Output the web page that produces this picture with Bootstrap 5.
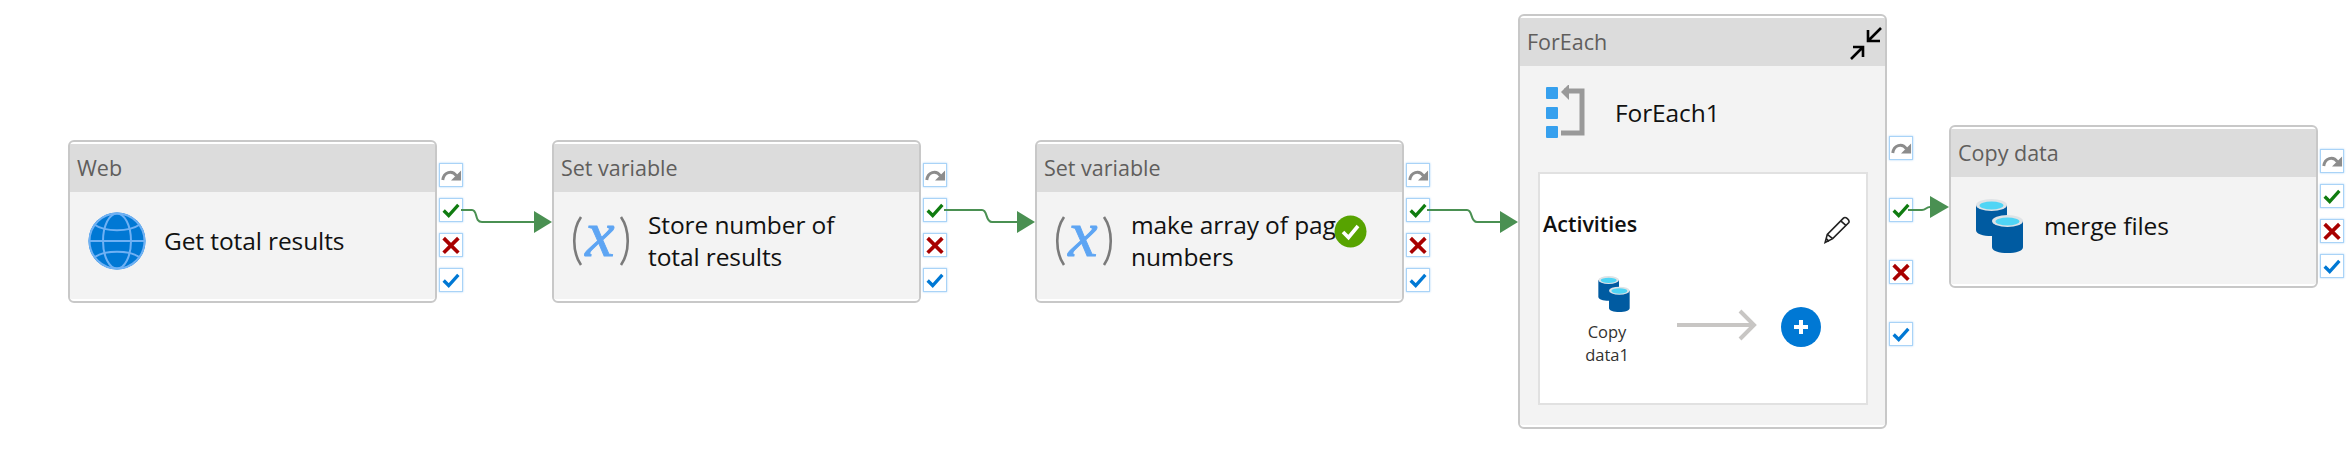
<!DOCTYPE html>
<html lang="en">
<head>
<meta charset="utf-8">
<title>Pipeline</title>
<link href="https://cdn.jsdelivr.net/npm/bootstrap@5.3.0/dist/css/bootstrap.min.css" rel="stylesheet">
<style>
html,body{background:#fff;margin:0;overflow:hidden}
body{font-family:"Open Sans","Noto Sans",sans-serif}
.canvas{position:relative;width:2352px;height:458px;overflow:hidden}
.wires{position:absolute;left:0;top:0;pointer-events:none}
.node{position:absolute}
.n1{left:68px;top:140px}
.n2{left:552px;top:140px}
.n3{left:1035px;top:140px}
.n4{left:1518px;top:14px}
.n5{left:1949px;top:125px}
.act.card{width:369px;height:163px;border:2.5px solid #c8c8c8;border-radius:6px;background:#fff;padding:2px 0;overflow:visible;flex:none;position:relative}
.act.tall{height:415px}
.act .card-header{height:48px;background:#dcdcdc;border:0;border-radius:0;padding:0 0 0 7px;font-size:21.5px;line-height:48px;color:#605e5c;display:flex;justify-content:space-between}
.act .card-body{background:#f3f3f3;padding:0;flex:1;min-height:0}
.main-row{height:106px;padding:0 0 9px 17px}
.main-row .ico{width:60px;flex:none}
.ttl{font-size:24.5px;line-height:32px;color:#111;margin-left:17px;width:240px;letter-spacing:-.1px}
.ports{width:24px;margin-left:2px;gap:11px;margin-top:23px;flex:none}
.ports.wide{gap:38px;margin-top:122px}
.ports.c5{margin-top:24px}
.port{width:24px;height:24px;background:#fff;border:1px solid #a9d3f7;box-shadow:0 0 2px #a9d3f7;display:block}
.done{position:absolute;left:297px;top:73px}
.fe-head{height:106px;padding:0 0 12px 26px}
.fe-name{font-size:24.5px;color:#111;margin-left:25px;letter-spacing:-.1px}
.inner{height:233px;width:330px;margin-left:18px;background:#fff;border:2px solid #e1e1e1;padding:0 3px}
.inner h6{font-size:21.5px;font-weight:600;color:#111;margin:0;padding-top:7px}
.inner-top{height:64px;padding-top:30px;padding-right:12px}
.inner-top svg{margin-top:12px}
.sub-copy{width:80px;font-size:16.5px;line-height:23px;color:#323130;text-align:center;margin-left:24px;padding-top:38px}
.sub-flow{margin-left:30px;margin-top:64px}
.sub-copy svg{display:block;margin:0 auto 8px;position:relative;left:7px}
</style>
</head>
<body>
<svg width="0" height="0" class="position-absolute">
<defs>
<symbol id="skip" viewBox="0 0 24 24"><path d="M3 17.500C4 9 13 6 18 13" fill="none" stroke="#8c8c8c" stroke-width="3.200"/><path d="M23 7V18H12Z" fill="#8c8c8c"/></symbol>
<symbol id="ok" viewBox="0 0 24 24"><path d="M4 12.500l5.500 5.500L20 6.500" fill="none" stroke="#107c10" stroke-width="3.600"/></symbol>
<symbol id="bad" viewBox="0 0 24 24"><path d="M4 4.500L20 20.500M20 4.500L4 20.500" fill="none" stroke="#a80000" stroke-width="4"/></symbol>
<symbol id="fin" viewBox="0 0 24 24"><path d="M4 12.500l5.500 5.500L20 6.500" fill="none" stroke="#0078d4" stroke-width="3.600"/></symbol>
<symbol id="vari" viewBox="0 0 60 50">
<path d="M10 1C1 14 1 36 10 49" fill="none" stroke="#7a7a7a" stroke-width="2.600"/>
<path d="M50 1C59 14 59 36 50 49" fill="none" stroke="#7a7a7a" stroke-width="2.600"/>
<text x="29" y="40" text-anchor="middle" font-family="Liberation Serif,serif" font-style="italic" font-size="66" fill="#5ea5f3" stroke="#5ea5f3" stroke-width=".9">x</text>
</symbol>
<symbol id="db" viewBox="0 0 47 54">
<path d="M0 6V31C0 35 7 37 15.500 37S31 35 31 31V6Z" fill="#005ba1"/>
<ellipse cx="15.500" cy="6" rx="15.500" ry="6" fill="#dfe3e6"/>
<ellipse cx="15.500" cy="6.500" rx="12" ry="4" fill="#50d5f5"/>
<path d="M16 22V48C16 52 23 54 31.500 54S47 52 47 48V22Z" fill="#005ba1"/>
<ellipse cx="31.500" cy="22" rx="15.500" ry="6" fill="#dfe3e6"/>
<ellipse cx="31.500" cy="22.500" rx="12" ry="4" fill="#50d5f5"/>
</symbol>
</defs>
</svg>
<div class="canvas">

<div class="node n1 d-flex">
  <div class="card act">
    <div class="card-header">Web</div>
    <div class="card-body">
      <div class="main-row d-flex align-items-center">
        <svg class="ico" width="60" height="58" viewBox="0 0 60 58"><circle cx="30" cy="29" r="28.500" fill="#0078d4"/><g fill="none" stroke="#6fb1f4" stroke-width="2"><circle cx="30" cy="29" r="27.500"/><ellipse cx="30" cy="29" rx="14" ry="27.500"/><path d="M2 29H58"/><path d="M8 13C18 20 42 20 52 13"/><path d="M8 45C18 38 42 38 52 45"/></g></svg>
        <div class="ttl">Get total results</div>
      </div>
    </div>
  </div>
  <div class="ports d-flex flex-column">
    <svg class="port"><use href="#skip"/></svg><svg class="port"><use href="#ok"/></svg><svg class="port"><use href="#bad"/></svg><svg class="port"><use href="#fin"/></svg>
  </div>
</div>

<div class="node n2 d-flex">
  <div class="card act">
    <div class="card-header">Set variable</div>
    <div class="card-body">
      <div class="main-row d-flex align-items-center">
        <svg class="ico" width="60" height="50"><use href="#vari"/></svg>
        <div class="ttl">Store number of total results</div>
      </div>
    </div>
  </div>
  <div class="ports d-flex flex-column">
    <svg class="port"><use href="#skip"/></svg><svg class="port"><use href="#ok"/></svg><svg class="port"><use href="#bad"/></svg><svg class="port"><use href="#fin"/></svg>
  </div>
</div>

<div class="node n3 d-flex">
  <div class="card act">
    <div class="card-header">Set variable</div>
    <div class="card-body">
      <div class="main-row d-flex align-items-center">
        <svg class="ico" width="60" height="50"><use href="#vari"/></svg>
        <div class="ttl">make array of page numbers</div>
      </div>
    </div>
    <svg class="done" width="33" height="33" viewBox="0 0 33 33"><circle cx="16.500" cy="16.500" r="16" fill="#57a300"/><path d="M9 17l5.500 5.500L24 11" fill="none" stroke="#fff" stroke-width="3.600"/></svg>
  </div>
  <div class="ports d-flex flex-column">
    <svg class="port"><use href="#skip"/></svg><svg class="port"><use href="#ok"/></svg><svg class="port"><use href="#bad"/></svg><svg class="port"><use href="#fin"/></svg>
  </div>
</div>

<div class="node n4 d-flex">
  <div class="card act tall">
    <div class="card-header">ForEach
      <svg width="36" height="40" viewBox="0 0 36 40" class="mt-1"><g fill="none" stroke="#000" stroke-width="2.600"><path d="M32 6L19 19M19 8V19H31"/><path d="M2 37L14 25M4 25H14V35"/></g></svg>
    </div>
    <div class="card-body">
      <div class="fe-head d-flex align-items-center">
        <svg width="44" height="56" viewBox="0 0 44 56" class="flex-none">
          <g fill="#36a0ee"><rect x="0" y="2" width="12" height="12" rx="1"/><rect x="0" y="22" width="12" height="12" rx="1"/><rect x="0" y="41" width="12" height="12" rx="1"/></g>
          <path d="M18 6H36V48H15" fill="none" stroke="#999" stroke-width="5"/><path d="M15 7L23 -1V15Z" fill="#999"/>
        </svg>
        <div class="fe-name">ForEach1</div>
      </div>
      <div class="inner">
        <div class="inner-top d-flex justify-content-between align-items-start">
          <h6>Activities</h6>
          <svg width="28" height="28" viewBox="0 0 26 26"><g fill="none" stroke="#222" stroke-width="1.500"><path d="M2 24.500L4 17L19 2C21 0 25 4 24 6L9 21Z"/><path d="M4 17L9 21M16.500 4.500L21.500 9M3 21L5.500 23.500"/></g></svg>
        </div>
        <div class="d-flex">
          <div class="sub-copy">
            <svg width="32" height="36"><use href="#db"/></svg>
            Copy data1
          </div>
          <svg class="sub-flow" width="156" height="60" viewBox="0 0 156 60"><g fill="none" stroke="#c8c6c4" stroke-width="4"><path d="M0 23H76"/><path d="M63 9L77 23L63 37"/></g><circle cx="124" cy="25" r="20" fill="#0078d4"/><path d="M124 18V32M117 25H131" stroke="#fff" stroke-width="4" fill="none"/></svg>
        </div>
      </div>
    </div>
  </div>
  <div class="ports wide d-flex flex-column">
    <svg class="port"><use href="#skip"/></svg><svg class="port"><use href="#ok"/></svg><svg class="port"><use href="#bad"/></svg><svg class="port"><use href="#fin"/></svg>
  </div>
</div>

<div class="node n5 d-flex">
  <div class="card act">
    <div class="card-header">Copy data</div>
    <div class="card-body">
      <div class="main-row d-flex align-items-center" style="padding-left:25px">
        <svg width="47" height="54" class="flex-none"><use href="#db"/></svg>
        <div class="ttl" style="margin-left:21px">merge files</div>
      </div>
    </div>
  </div>
  <div class="ports c5 d-flex flex-column">
    <svg class="port"><use href="#skip"/></svg><svg class="port"><use href="#ok"/></svg><svg class="port"><use href="#bad"/></svg><svg class="port"><use href="#fin"/></svg>
  </div>
</div>

<svg class="wires" width="2352" height="458" viewBox="0 0 2352 458">
  <g fill="none" stroke="#4a9052" stroke-width="2">
    <path d="M461 210H472C478 210 474 222 482 222H536"/>
    <path d="M944 210H982C988 210 985 222 992 222H1020"/>
    <path d="M1427 210H1467C1473 210 1470 222 1477 222H1504"/>
    <path d="M1908 210H1922C1926 210 1926 207 1930 207H1932"/>
  </g>
  <g fill="#4a9052">
    <path d="M534 211L552 222L534 233Z"/>
    <path d="M1017 211L1035 222L1017 233Z"/>
    <path d="M1500 211L1518 222L1500 233Z"/>
    <path d="M1930 196L1949 207L1930 218Z"/>
  </g>
</svg>
</div>
<script src="https://cdn.jsdelivr.net/npm/bootstrap@5.3.0/dist/js/bootstrap.bundle.min.js"></script>
</body>
</html>
